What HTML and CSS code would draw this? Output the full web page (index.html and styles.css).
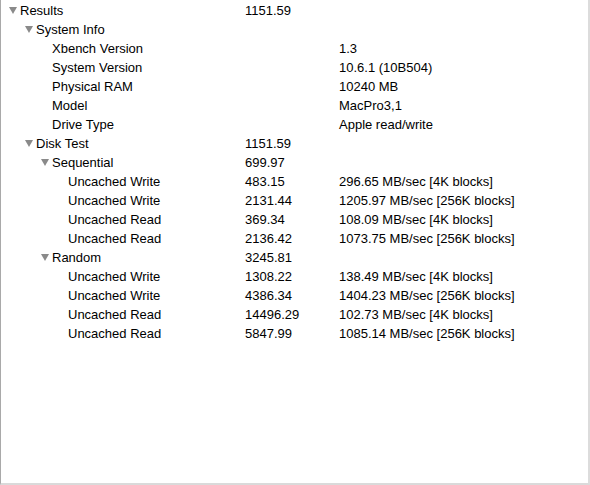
FILE: index.html
```html
<!DOCTYPE html>
<html>
<head>
<meta charset="utf-8">
<link rel="stylesheet" href="styles.css">
</head>
<body>
<div class="outline">
  <div class="row"><div class="name l0"><span class="tri"></span>Results</div><div class="val">1151.59</div><div class="info"></div></div>
  <div class="row"><div class="name l1"><span class="tri"></span>System Info</div><div class="val"></div><div class="info"></div></div>
  <div class="row"><div class="name l2 leaf">Xbench Version</div><div class="val"></div><div class="info">1.3</div></div>
  <div class="row"><div class="name l2 leaf">System Version</div><div class="val"></div><div class="info">10.6.1 (10B504)</div></div>
  <div class="row"><div class="name l2 leaf">Physical RAM</div><div class="val"></div><div class="info">10240 MB</div></div>
  <div class="row"><div class="name l2 leaf">Model</div><div class="val"></div><div class="info">MacPro3,1</div></div>
  <div class="row"><div class="name l2 leaf">Drive Type</div><div class="val"></div><div class="info">Apple read/write</div></div>
  <div class="row"><div class="name l1"><span class="tri"></span>Disk Test</div><div class="val">1151.59</div><div class="info"></div></div>
  <div class="row"><div class="name l2"><span class="tri"></span>Sequential</div><div class="val">699.97</div><div class="info"></div></div>
  <div class="row"><div class="name l3 leaf">Uncached Write</div><div class="val">483.15</div><div class="info">296.65 MB/sec [4K blocks]</div></div>
  <div class="row"><div class="name l3 leaf">Uncached Write</div><div class="val">2131.44</div><div class="info">1205.97 MB/sec [256K blocks]</div></div>
  <div class="row"><div class="name l3 leaf">Uncached Read</div><div class="val">369.34</div><div class="info">108.09 MB/sec [4K blocks]</div></div>
  <div class="row"><div class="name l3 leaf">Uncached Read</div><div class="val">2136.42</div><div class="info">1073.75 MB/sec [256K blocks]</div></div>
  <div class="row"><div class="name l2"><span class="tri"></span>Random</div><div class="val">3245.81</div><div class="info"></div></div>
  <div class="row"><div class="name l3 leaf">Uncached Write</div><div class="val">1308.22</div><div class="info">138.49 MB/sec [4K blocks]</div></div>
  <div class="row"><div class="name l3 leaf">Uncached Write</div><div class="val">4386.34</div><div class="info">1404.23 MB/sec [256K blocks]</div></div>
  <div class="row"><div class="name l3 leaf">Uncached Read</div><div class="val">14496.29</div><div class="info">102.73 MB/sec [4K blocks]</div></div>
  <div class="row"><div class="name l3 leaf">Uncached Read</div><div class="val">5847.99</div><div class="info">1085.14 MB/sec [256K blocks]</div></div>
</div>
</body>
</html>
```
FILE: styles.css
```css
html, body {
  margin: 0;
  padding: 0;
  background: #ffffff;
}
.outline {
  box-sizing: border-box;
  width: 590px;
  height: 485px;
  padding-top: 1px;
  border-left: 1px solid #a9a9a9;
  border-right: 2px solid #dcdcdc;
  border-bottom: 2px solid #dadada;
  background: #ffffff;
  font-family: "Liberation Sans", Arial, sans-serif;
  font-size: 13px;
  color: #000000;
}
.row {
  display: grid;
  grid-template-columns: 244px 94px 1fr;
  height: 19px;
  line-height: 19px;
  white-space: nowrap;
}
.name {
  display: flex;
  align-items: center;
}
.l0 { padding-left: 7px; }
.l1 { padding-left: 23px; }
.l2 { padding-left: 39px; }
.l3 { padding-left: 55px; }
.leaf.l2 { padding-left: 51px; }
.leaf.l3 { padding-left: 67px; }
.tri {
  width: 0;
  height: 0;
  margin-left: 1px;
  margin-right: 3px;
  border-left: 4px solid transparent;
  border-right: 4px solid transparent;
  border-top: 7px solid #8a8a8a;
}
```
